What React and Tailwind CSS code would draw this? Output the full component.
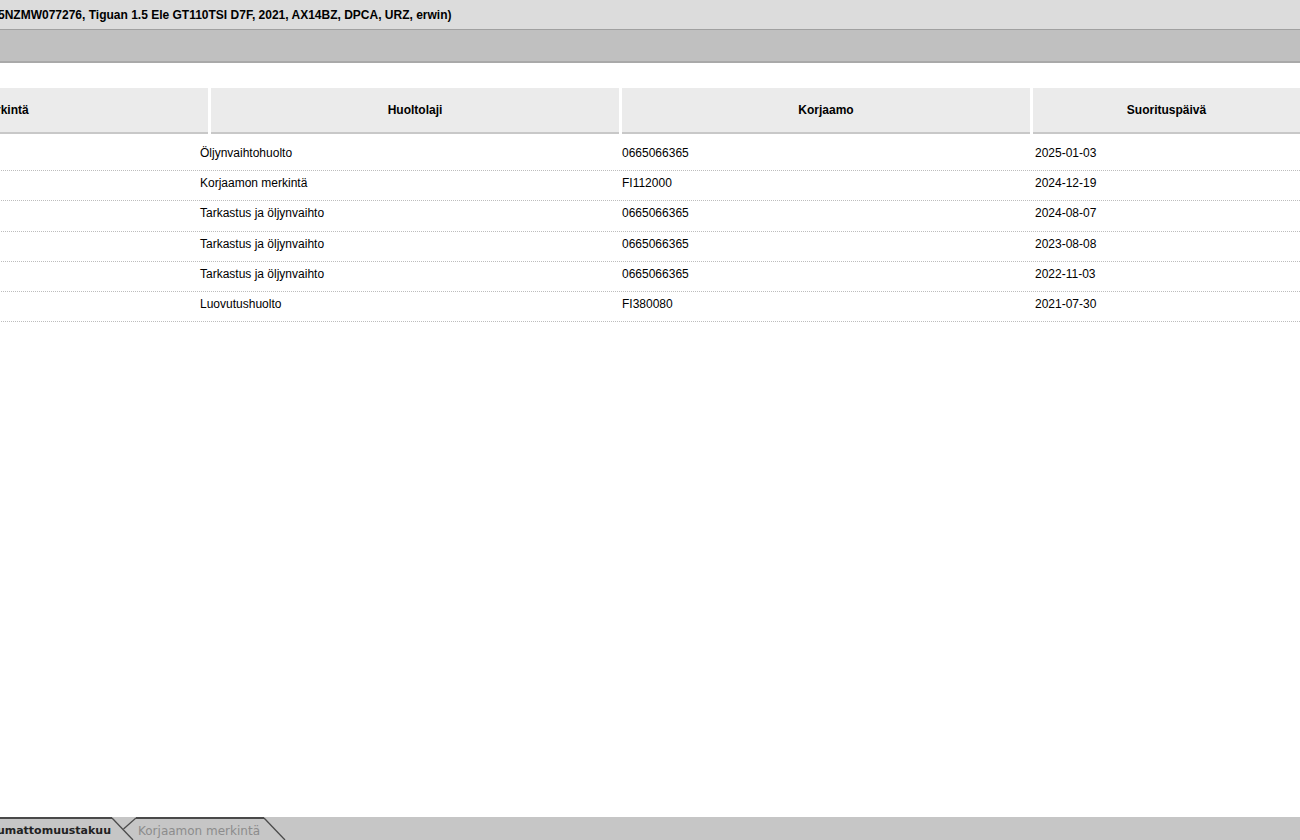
import React from "react";

const rows = [
  ["", "Öljynvaihtohuolto", "0665066365", "2025-01-03"],
  ["", "Korjaamon merkintä", "FI112000", "2024-12-19"],
  ["", "Tarkastus ja öljynvaihto", "0665066365", "2024-08-07"],
  ["", "Tarkastus ja öljynvaihto", "0665066365", "2023-08-08"],
  ["", "Tarkastus ja öljynvaihto", "0665066365", "2022-11-03"],
  ["", "Luovutushuolto", "FI380080", "2021-07-30"],
];

const headers = ["Merkintä", "Huoltolaji", "Korjaamo", "Suorituspäivä"];

export default function App() {
  return (
    <div
      className="w-[1300px] h-[840px] overflow-hidden flex flex-col bg-white text-black"
      style={{ fontFamily: '"Liberation Sans", Arial, sans-serif' }}
    >
      <div className="h-[30px] shrink-0 bg-[#dcdcdc] border-b border-[#a0a0a0] flex items-center overflow-hidden">
        <span className="-ml-[2px] text-[12px] font-bold whitespace-nowrap leading-none">
          5NZMW077276, Tiguan 1.5 Ele GT110TSI D7F, 2021, AX14BZ, DPCA, URZ, erwin)
        </span>
      </div>
      <div className="h-[33px] shrink-0 bg-[#c0c0c0] border-b-2 border-[#a9a9a9]" />

      <div className="flex-1 min-h-0 overflow-hidden">
        <div className="mt-[25px] -ml-[200px] w-[1500px]">
          <div className="grid grid-cols-[408px_408px_408px_267px] gap-x-[3px]">
            {headers.map((h) => (
              <div
                key={h}
                className="h-[46px] bg-[#ebebeb] border-b-2 border-[#c8c8c8] flex items-center justify-center text-[12px] font-bold whitespace-nowrap"
              >
                {h}
              </div>
            ))}
          </div>
          <div className="pt-[7px]">
            {rows.map((r, i) => (
              <div
                key={i}
                className="h-[30.2px] grid grid-cols-[397px_422px_413px_268px] border-b border-dotted border-[#bdbdbd]"
              >
                {r.map((c, j) => (
                  <div key={j} className="pl-[3px] pt-[5px] text-[12px] leading-[14px] whitespace-nowrap">
                    {c}
                  </div>
                ))}
              </div>
            ))}
          </div>
        </div>
      </div>

      <div
        className="h-[23px] shrink-0 bg-[#c6c6c6] flex items-stretch"
        style={{ fontFamily: '"DejaVu Sans", sans-serif' }}
      >
        <div className="w-[112px] border-t-2 border-[#4a4a4a] pt-[4px] pr-[1px] flex justify-end text-[11px] font-bold text-[#222] whitespace-nowrap overflow-hidden">
          <span className="shrink-0">umattomuustakuu</span>
        </div>
        <svg width="24" height="23" viewBox="0 0 24 23" className="shrink-0">
          <line x1="0" y1="1" x2="21" y2="23" stroke="#4a4a4a" strokeWidth="1.3" />
          <line x1="24" y1="1" x2="11.5" y2="12" stroke="#4a4a4a" strokeWidth="1.3" />
        </svg>
        <div className="w-[128px] border-t-2 border-[#4a4a4a] pt-[3px] pl-[2px] text-[12px] text-[#8c8c8c] whitespace-nowrap overflow-hidden">
          Korjaamon merkintä
        </div>
        <svg width="22" height="23" viewBox="0 0 22 23" className="shrink-0">
          <line x1="0" y1="1" x2="21" y2="23" stroke="#4a4a4a" strokeWidth="1.3" />
        </svg>
        <div className="flex-1" />
      </div>
    </div>
  );
}
